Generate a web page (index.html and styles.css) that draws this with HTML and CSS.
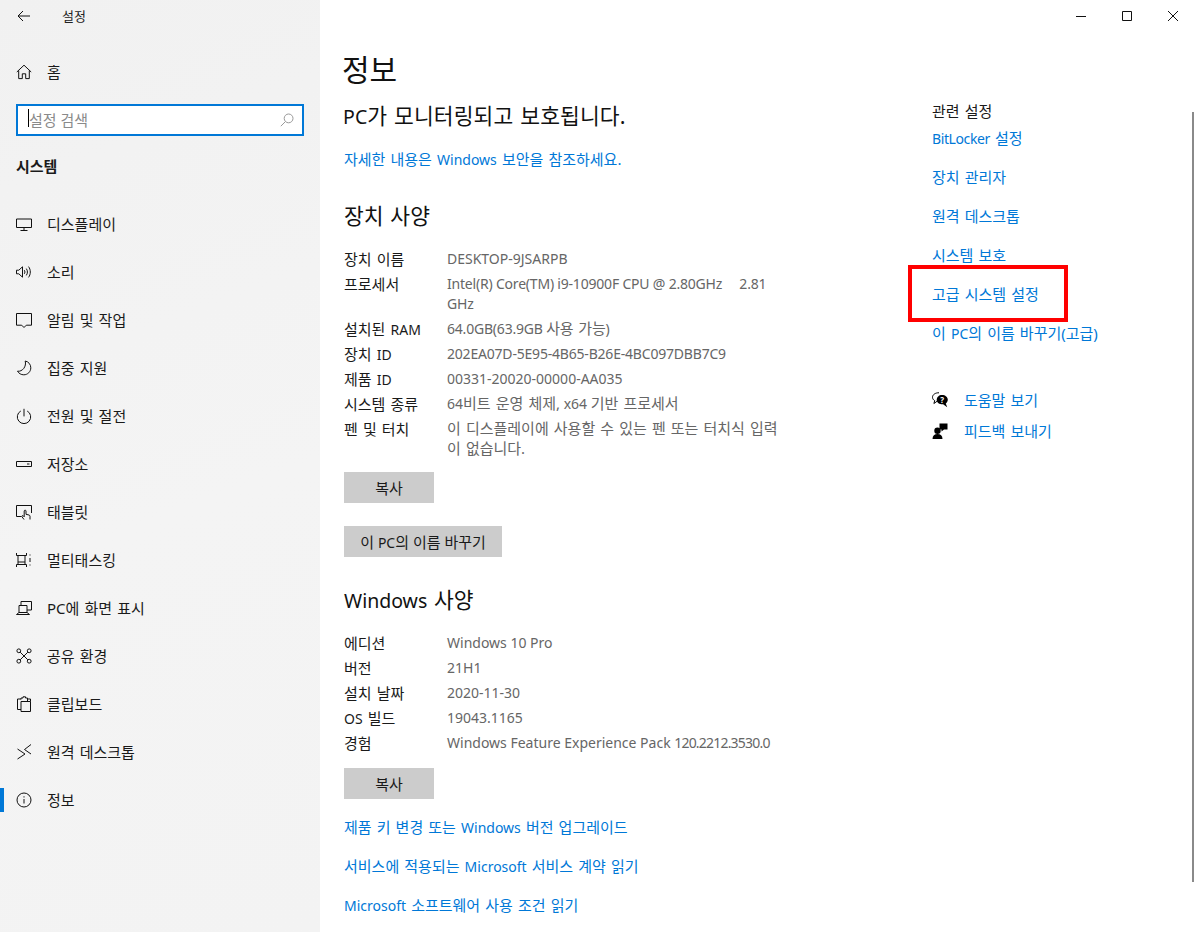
FILE: index.html
```html
<!DOCTYPE html>
<html lang="ko">
<head>
<meta charset="utf-8">
<title>설정</title>
<link rel="stylesheet" href="styles.css">
</head>
<body>
<div class="app">
  <aside class="sidebar">
    <div class="titlebar">
      <svg class="back" width="16" height="16" viewBox="0 0 16 16"><path d="M14 8H2M7 3L2 8l5 5"/></svg>
      <span class="app-title">설정</span>
    </div>
    <a class="nav-item home"><svg class="ico" viewBox="0 0 16 16"><path d="M.8 8L8 1.2 15.2 8M2.700 6.500v8.100h3.600V9.800h3.400v4.800h3.600V6.500"/></svg><span>홈</span></a>
    <div class="search">
      <span class="caret"></span>
      <span class="search-ph">설정 검색</span>
      <svg class="search-ico" width="14" height="14" viewBox="0 0 14 14"><circle cx="8.600" cy="5.400" r="4.400"/><path d="M5.400 8.600L.8 13.200"/></svg>
    </div>
    <div class="section">시스템</div>
    <nav class="nav">
      <a class="nav-item"><svg class="ico" viewBox="0 0 16 16"><path d="M.5 3h15v8.500H.5zM8 11.500v3M4.500 14.500h7"/></svg><span>디스플레이</span></a>
      <a class="nav-item"><svg class="ico" viewBox="0 0 16 16"><path d="M.5 6.200h2.300L6.500 2.800v10.400L2.800 9.800H.5zM8.300 6.200c.8 1 .8 2.600 0 3.600M10.300 4.600c1.500 2 1.500 4.800 0 6.800M12.500 2.600c2.400 3 2.400 7.800 0 10.800"/></svg><span>소리</span></a>
      <a class="nav-item"><svg class="ico" viewBox="0 0 16 16"><path d="M.5 1.500h15v11.700h-5.200L8 15.500l-2.300-2.300H.5z"/></svg><span>알림 및 작업</span></a>
      <a class="nav-item"><svg class="ico" viewBox="0 0 16 16"><path d="M9.200 1c3.200.6 5.600 3.300 5.600 6.800 0 3.900-3.100 7-7 7-2.700 0-5-1.400-6.300-3.600 4.900.7 9.200-4.700 7.700-10.200z"/></svg><span>집중 지원</span></a>
      <a class="nav-item"><svg class="ico" viewBox="0 0 16 16"><path d="M8 .8v7.600M4.800 3a6.700 6.700 0 1 0 6.400 0"/></svg><span>전원 및 절전</span></a>
      <a class="nav-item"><svg class="ico" viewBox="0 0 16 16"><path d="M.5 5.500h15v5H.5zM11 8h2.500"/></svg><span>저장소</span></a>
      <a class="nav-item"><svg class="ico" viewBox="0 0 16 16"><path d="M5.500 12.500H.5V1.500h15v7.500M8 15.500l-2-2.700c-.5-1 .6-1.600 1.300-1l.9 1V7c0-1.100 1.800-1.100 1.800 0v3.300l3 .7c.7.2 1 .7 1 1.300v3.200"/></svg><span>태블릿</span></a>
      <a class="nav-item"><svg class="ico" viewBox="0 0 16 16"><path d="M.5 1v2.500h10V1M.5 15v-2.500h10V15M2 3.500v9M9 3.500v9M2 10h7M14 2.500v1M14 6v4M14 12.500v1"/></svg><span>멀티태스킹</span></a>
      <a class="nav-item"><svg class="ico" viewBox="0 0 16 16"><path d="M5 5V1.500h10.500v8.500H11M3 5.500h8v7H3zM.5 14.500h13M3 12.500L.5 14.500M11 12.500l2.500 2"/></svg><span>PC에 화면 표시</span></a>
      <a class="nav-item"><svg class="ico" viewBox="0 0 16 16"><circle cx="2.800" cy="2.800" r="1.900"/><circle cx="13.200" cy="2.800" r="1.900"/><circle cx="2.800" cy="13.200" r="1.900"/><circle cx="13.200" cy="13.200" r="1.900"/><path d="M4.200 4.200l7.600 7.600M11.800 4.200l-7.600 7.600"/></svg><span>공유 환경</span></a>
      <a class="nav-item"><svg class="ico" viewBox="0 0 16 16"><path d="M5 3H1.500v10.500H5M5 5.500h9.500v10H5zM5 3.500V2h2V.8h2.500V2h2v3.500M14.500 5.500V3H12"/></svg><span>클립보드</span></a>
      <a class="nav-item"><svg class="ico" viewBox="0 0 16 16"><path d="M1.500 15L9 10 1.500 5M15 .5L8.500 5.500 15 10"/></svg><span>원격 데스크톱</span></a>
      <a class="nav-item active"><svg class="ico" viewBox="0 0 16 16"><circle cx="8" cy="8" r="7"/><path d="M8 7v4.500M8 4.300v1.200"/></svg><span>정보</span></a>
    </nav>
  </aside>

  <main class="main">
    <div class="winbar">
      <svg class="winbtn" width="10" height="10" viewBox="0 0 10 10"><path d="M0 5.500h10"/></svg>
      <svg class="winbtn" width="10" height="10" viewBox="0 0 10 10"><path d="M.5.500h9v9h-9z"/></svg>
      <svg class="winbtn" width="10" height="10" viewBox="0 0 10 10"><path d="M0 0l10 10M10 0L0 10"/></svg>
    </div>
    <div class="columns">
      <section class="content">
        <h1 class="page-title">정보</h1>
        <h2 class="status"><span class="en-h">PC</span>가 모니터링되고 보호됩니다.</h2>
        <a class="link status-link">자세한 내용은 <span class="en">Windows</span> 보안을 참조하세요.</a>
        <h2 class="heading heading-device">장치 사양</h2>
        <dl class="specs">
          <dt>장치 이름</dt><dd>DESKTOP-9JSARPB</dd>
          <dt>프로세서</dt><dd class="tight">Intel(R) Core(TM) i9-10900F CPU @ 2.80GHz &nbsp; &nbsp; 2.81<br>GHz</dd>
          <dt>설치된 <span class="en">RAM</span></dt><dd class="tight">64.0GB(63.9GB <span class="ko">사용 가능</span>)</dd>
          <dt>장치 <span class="en">ID</span></dt><dd class="tight">202EA07D-5E95-4B65-B26E-4BC097DBB7C9</dd>
          <dt>제품 <span class="en">ID</span></dt><dd>00331-20020-00000-AA035</dd>
          <dt>시스템 종류</dt><dd>64<span class="ko">비트 운영 체제,</span> x64 <span class="ko">기반 프로세서</span></dd>
          <dt>펜 및 터치</dt><dd><span class="ko">이 디스플레이에 사용할 수 있는 펜 또는 터치식 입력<br>이 없습니다.</span></dd>
        </dl>
        <button class="btn btn-copy">복사</button>
        <button class="btn btn-rename">이 <span class="en">PC</span>의 이름 바꾸기</button>
        <h2 class="heading heading-win"><span class="en-h">Windows</span> 사양</h2>
        <dl class="specs">
          <dt>에디션</dt><dd>Windows 10 Pro</dd>
          <dt>버전</dt><dd>21H1</dd>
          <dt>설치 날짜</dt><dd>2020-11-30</dd>
          <dt><span class="en">OS</span> 빌드</dt><dd>19043.1165</dd>
          <dt>경험</dt><dd>Windows Feature Experience Pack <span class="ver">120.2212.3530.0</span></dd>
        </dl>
        <button class="btn btn-copy btn-copy-win">복사</button>
        <div class="links">
          <a class="link">제품 키 변경 또는 <span class="en">Windows</span> 버전 업그레이드</a>
          <a class="link">서비스에 적용되는 <span class="en">Microsoft</span> 서비스 계약 읽기</a>
          <a class="link"><span class="en">Microsoft</span> 소프트웨어 사용 조건 읽기</a>
        </div>
      </section>
      <aside class="related">
        <div class="related-title">관련 설정</div>
        <div class="links related-links">
          <a class="link"><span class="en en-narrow">BitLocker</span> 설정</a>
          <a class="link">장치 관리자</a>
          <a class="link">원격 데스크톱</a>
          <a class="link">시스템 보호</a>
          <a class="link">고급 시스템 설정</a>
          <a class="link">이 <span class="en">PC</span>의 이름 바꾸기(고급)</a>
        </div>
        <div class="help">
          <a class="help-row"><svg class="help-ico" viewBox="0 0 16 16"><path class="line" d="M7 .8C3.500.6.5 2.600.5 5.300c0 1.500 1 2.700 2.200 3.300L1.900 11.500 5 9.300"/><path class="fill" d="M10 3c3.300 0 5.800 2.100 5.800 4.800 0 1.500-.8 2.900-2 3.700l1.400 3.800-4.100-3c-3.300.2-6.400-1.500-6.400-4.400C4.700 5.100 7 3 10 3z"/><text class="q" x="10.200" y="11" text-anchor="middle">?</text></svg><span class="link">도움말 보기</span></a>
          <a class="help-row"><svg class="help-ico" viewBox="0 0 16 16"><circle class="fill" cx="5.500" cy="7.800" r="3.200"/><path class="fill" d="M.5 16c0-3.200 2-5 5-5s5 1.800 5 5z"/><path class="fill" d="M7.500 .5h8v6h-3.500l-2.500 2v-2h-2z"/></svg><span class="link">피드백 보내기</span></a>
        </div>
      </aside>
    </div>
    <div class="scrollbar"></div>
    <div class="redbox"></div>
  </main>
</div>
</body>
</html>
```
FILE: styles.css
```css
* { box-sizing: border-box; }
html, body { margin: 0; height: 100%; }
body {
  background: #fff;
  color: #000;
  font-family: "Noto Sans", "Noto Sans CJK KR", sans-serif;
  font-size: 15px;
  line-height: 20px;
  word-spacing: 1.2px;
  overflow: hidden;
}
.en { font-size: 14px; line-height: 1; }
.en-narrow { letter-spacing: -.4px; }
.ko { font-size: 15px; line-height: 1; word-spacing: 1.2px; }
.en-h { font-size: 19.5px; line-height: 1; }
.app { display: flex; width: 1196px; height: 932px; }

.sidebar {
  width: 320px;
  flex: none;
  background: linear-gradient(160deg, #f1f1f1, #f4f4f4 55%, #f3f3f3);
}
.titlebar { display: flex; align-items: center; height: 32px; padding-left: 16px; }
.back { fill: none; stroke: #111; stroke-width: 1; }
.app-title { margin-left: 30px; font-size: 13px; color: #222; }
.nav-item {
  position: relative;
  display: flex;
  align-items: center;
  gap: 15px;
  height: 48px;
  padding-left: 16px;
  color: #1a1a1a;
}
.home { margin-top: 16px; margin-bottom: 8px; height: 48px; }
.ico { width: 16px; height: 16px; flex: none; fill: none; stroke: #111; stroke-width: 1; }
.search {
  position: relative;
  display: flex;
  align-items: center;
  justify-content: space-between;
  width: 288px;
  height: 32px;
  margin-left: 16px;
  padding: 0 8px 0 11px;
  background: #fff;
  border: 2px solid #0078d7;
}
.caret { position: absolute; left: 10px; top: 3px; width: 1px; height: 18px; background: #000; }
.search-ph { color: #8a8a8a; font-size: 15px; word-spacing: 0; }
.search-ico { fill: none; stroke: #999; stroke-width: 1; }
.section { margin: 20px 0 24px 16px; font-weight: 700; color: #1a1a1a; }
.active::before {
  content: "";
  position: absolute;
  left: 0;
  top: 12px;
  width: 4px;
  height: 24px;
  background: #0078d7;
}

.main { position: relative; flex: 1; min-width: 0; }
.winbar { display: flex; justify-content: flex-end; align-items: center; gap: 36px; height: 32px; padding-right: 18px; }
.winbtn { fill: none; stroke: #111; stroke-width: 1; }
.columns { display: flex; padding-left: 24px; }
.content { width: 588px; flex: none; display: flex; flex-direction: column; align-items: flex-start; }
.page-title { margin: 18px 0 0 -2px; font-size: 30px; line-height: 40px; font-weight: 400; color: #111; }
.status { margin: 12px 0 0 -1px; font-size: 21.5px; line-height: 28px; font-weight: 400; color: #111; letter-spacing: .1px; }
.link { color: #0078d7; }
.status-link { margin-top: 19px; }
.heading { margin: 0; font-size: 21.5px; line-height: 28px; font-weight: 400; color: #111; }
.heading-device { margin-top: 33px; }
.heading-win { margin-top: 29px; }
.specs {
  display: grid;
  grid-template-columns: 103px 340px;
  row-gap: 5px;
  margin: 19px 0 0;
}
.specs dt { color: #1a1a1a; }
.specs dd { margin: 0; color: #666; font-size: 14px; word-spacing: 0; }
.specs .tight { letter-spacing: -.2px; }
.specs .ver { letter-spacing: -.8px; }
.btn {
  height: 31px;
  padding: 0;
  border: 0;
  background: #ccc;
  color: #1a1a1a;
  font: inherit;
}
.btn-copy { width: 90px; margin-top: 13px; }
.btn-copy-win { margin-top: 15px; }
.btn-rename { width: 158px; margin-top: 23px; }
.links { display: flex; flex-direction: column; gap: 19px; margin-top: 18px; }
.related { padding-top: 69px; width: 240px; }
.related-title { color: #1a1a1a; }
.related-links { margin-top: 7px; }
.help { display: flex; flex-direction: column; gap: 11px; margin-top: 47px; }
.help-row { display: flex; align-items: center; gap: 16px; }
.help-ico { width: 16px; height: 16px; flex: none; }
.help-ico .fill { fill: #000; }
.help-ico .line { fill: none; stroke: #000; stroke-width: 1; }
.help-ico .q { fill: #fff; font-size: 8px; font-weight: 700; }
.scrollbar { position: absolute; right: 2px; top: 112px; width: 2px; height: 770px; background: #8a8a8a; }
.redbox { position: absolute; left: 588px; top: 265px; width: 160px; height: 57px; border: 4px solid #f00; }
```
